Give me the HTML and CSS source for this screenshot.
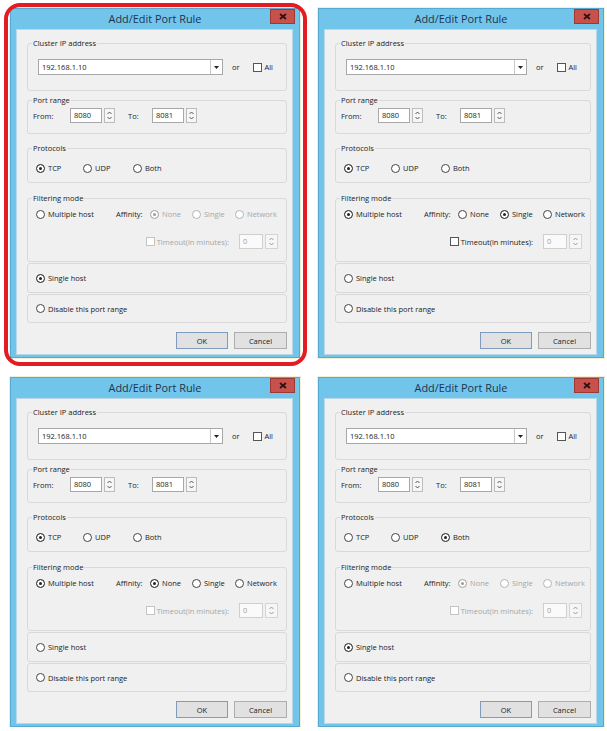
FILE: index.html
```html
<!DOCTYPE html>
<html lang="en">
<head>
    <meta charset="UTF-8">
    <meta name="viewport" content="width=device-width, initial-scale=1.0">
    <title>Add/Edit Port Rule</title>
    <link rel="stylesheet" href="styles.css">
</head>
<body>
    <div class="sheet">

        <!-- 1: single host, TCP -->
        <div class="dialog highlight">
            <div class="titlebar">
                <span class="title">Add/Edit Port Rule</span>
                <span class="close"><svg width="8" height="7" viewBox="0 0 8 7"><path d="M1 1l6 5M7 1 1 6" stroke="#2a1414" stroke-width="1.8"/></svg></span>
            </div>
            <div class="client">
                <fieldset class="group g-ip">
                    <legend>Cluster IP address</legend>
                    <div class="row">
                        <div class="combo"><span class="combo-text">192.168.1.10</span><span class="combo-btn"><svg width="5" height="3" viewBox="0 0 5 3"><path d="M0 0h5L2.5 3z" fill="#222"/></svg></span></div>
                        <span class="or">or</span>
                        <span class="check"><span class="box"></span>All</span>
                    </div>
                </fieldset>
                <fieldset class="group g-port">
                    <legend>Port range</legend>
                    <div class="row">
                        <span class="from">From:</span>
                        <div class="spin"><span class="spin-text">8080</span><span class="spin-btn"><svg width="7" height="11" viewBox="0 0 7 11"><path d="M1.5 4 3.5 2 5.5 4M1.5 7 3.5 9 5.5 7" fill="none" stroke="#555"/></svg></span></div>
                        <span class="to">To:</span>
                        <div class="spin"><span class="spin-text">8081</span><span class="spin-btn"><svg width="7" height="11" viewBox="0 0 7 11"><path d="M1.5 4 3.5 2 5.5 4M1.5 7 3.5 9 5.5 7" fill="none" stroke="#555"/></svg></span></div>
                    </div>
                </fieldset>
                <fieldset class="group g-proto">
                    <legend>Protocols</legend>
                    <div class="row">
                        <span class="radio tcp on"><span class="dot"></span>TCP</span>
                        <span class="radio udp"><span class="dot"></span>UDP</span>
                        <span class="radio"><span class="dot"></span>Both</span>
                    </div>
                </fieldset>
                <fieldset class="group g-filter">
                    <legend>Filtering mode</legend>
                    <div class="row">
                        <span class="radio multi"><span class="dot"></span>Multiple host</span>
                        <span class="affinity">Affinity:</span>
                        <span class="radio none on off"><span class="dot"></span>None</span>
                        <span class="radio single off"><span class="dot"></span>Single</span>
                        <span class="radio off"><span class="dot"></span>Network</span>
                    </div>
                    <div class="row timeout">
                        <span class="check off"><span class="box"></span>Timeout(in minutes):</span>
                        <div class="spin small off"><span class="spin-text">0</span><span class="spin-btn"><svg width="7" height="11" viewBox="0 0 7 11"><path d="M1.5 4 3.5 2 5.5 4M1.5 7 3.5 9 5.5 7" fill="none" stroke="#999"/></svg></span></div>
                    </div>
                </fieldset>
                <div class="group-plain first">
                    <span class="radio on"><span class="dot"></span>Single host</span>
                </div>
                <div class="group-plain">
                    <span class="radio"><span class="dot"></span>Disable this port range</span>
                </div>
                <div class="buttons">
                    <button class="default">OK</button>
                    <button>Cancel</button>
                </div>
            </div>
        </div>

        <!-- 2: multiple host, affinity single -->
        <div class="dialog">
            <div class="titlebar">
                <span class="title">Add/Edit Port Rule</span>
                <span class="close"><svg width="8" height="7" viewBox="0 0 8 7"><path d="M1 1l6 5M7 1 1 6" stroke="#2a1414" stroke-width="1.8"/></svg></span>
            </div>
            <div class="client">
                <fieldset class="group g-ip">
                    <legend>Cluster IP address</legend>
                    <div class="row">
                        <div class="combo"><span class="combo-text">192.168.1.10</span><span class="combo-btn"><svg width="5" height="3" viewBox="0 0 5 3"><path d="M0 0h5L2.5 3z" fill="#222"/></svg></span></div>
                        <span class="or">or</span>
                        <span class="check"><span class="box"></span>All</span>
                    </div>
                </fieldset>
                <fieldset class="group g-port">
                    <legend>Port range</legend>
                    <div class="row">
                        <span class="from">From:</span>
                        <div class="spin"><span class="spin-text">8080</span><span class="spin-btn"><svg width="7" height="11" viewBox="0 0 7 11"><path d="M1.5 4 3.5 2 5.5 4M1.5 7 3.5 9 5.5 7" fill="none" stroke="#555"/></svg></span></div>
                        <span class="to">To:</span>
                        <div class="spin"><span class="spin-text">8081</span><span class="spin-btn"><svg width="7" height="11" viewBox="0 0 7 11"><path d="M1.5 4 3.5 2 5.5 4M1.5 7 3.5 9 5.5 7" fill="none" stroke="#555"/></svg></span></div>
                    </div>
                </fieldset>
                <fieldset class="group g-proto">
                    <legend>Protocols</legend>
                    <div class="row">
                        <span class="radio tcp on"><span class="dot"></span>TCP</span>
                        <span class="radio udp"><span class="dot"></span>UDP</span>
                        <span class="radio"><span class="dot"></span>Both</span>
                    </div>
                </fieldset>
                <fieldset class="group g-filter">
                    <legend>Filtering mode</legend>
                    <div class="row">
                        <span class="radio multi on"><span class="dot"></span>Multiple host</span>
                        <span class="affinity">Affinity:</span>
                        <span class="radio none"><span class="dot"></span>None</span>
                        <span class="radio single on"><span class="dot"></span>Single</span>
                        <span class="radio"><span class="dot"></span>Network</span>
                    </div>
                    <div class="row timeout">
                        <span class="check"><span class="box"></span>Timeout(in minutes):</span>
                        <div class="spin small off"><span class="spin-text">0</span><span class="spin-btn"><svg width="7" height="11" viewBox="0 0 7 11"><path d="M1.5 4 3.5 2 5.5 4M1.5 7 3.5 9 5.5 7" fill="none" stroke="#999"/></svg></span></div>
                    </div>
                </fieldset>
                <div class="group-plain first">
                    <span class="radio"><span class="dot"></span>Single host</span>
                </div>
                <div class="group-plain">
                    <span class="radio"><span class="dot"></span>Disable this port range</span>
                </div>
                <div class="buttons">
                    <button class="default">OK</button>
                    <button>Cancel</button>
                </div>
            </div>
        </div>

        <!-- 3: multiple host, affinity none -->
        <div class="dialog">
            <div class="titlebar">
                <span class="title">Add/Edit Port Rule</span>
                <span class="close"><svg width="8" height="7" viewBox="0 0 8 7"><path d="M1 1l6 5M7 1 1 6" stroke="#2a1414" stroke-width="1.8"/></svg></span>
            </div>
            <div class="client">
                <fieldset class="group g-ip">
                    <legend>Cluster IP address</legend>
                    <div class="row">
                        <div class="combo"><span class="combo-text">192.168.1.10</span><span class="combo-btn"><svg width="5" height="3" viewBox="0 0 5 3"><path d="M0 0h5L2.5 3z" fill="#222"/></svg></span></div>
                        <span class="or">or</span>
                        <span class="check"><span class="box"></span>All</span>
                    </div>
                </fieldset>
                <fieldset class="group g-port">
                    <legend>Port range</legend>
                    <div class="row">
                        <span class="from">From:</span>
                        <div class="spin"><span class="spin-text">8080</span><span class="spin-btn"><svg width="7" height="11" viewBox="0 0 7 11"><path d="M1.5 4 3.5 2 5.5 4M1.5 7 3.5 9 5.5 7" fill="none" stroke="#555"/></svg></span></div>
                        <span class="to">To:</span>
                        <div class="spin"><span class="spin-text">8081</span><span class="spin-btn"><svg width="7" height="11" viewBox="0 0 7 11"><path d="M1.5 4 3.5 2 5.5 4M1.5 7 3.5 9 5.5 7" fill="none" stroke="#555"/></svg></span></div>
                    </div>
                </fieldset>
                <fieldset class="group g-proto">
                    <legend>Protocols</legend>
                    <div class="row">
                        <span class="radio tcp on"><span class="dot"></span>TCP</span>
                        <span class="radio udp"><span class="dot"></span>UDP</span>
                        <span class="radio"><span class="dot"></span>Both</span>
                    </div>
                </fieldset>
                <fieldset class="group g-filter">
                    <legend>Filtering mode</legend>
                    <div class="row">
                        <span class="radio multi on"><span class="dot"></span>Multiple host</span>
                        <span class="affinity">Affinity:</span>
                        <span class="radio none on"><span class="dot"></span>None</span>
                        <span class="radio single"><span class="dot"></span>Single</span>
                        <span class="radio"><span class="dot"></span>Network</span>
                    </div>
                    <div class="row timeout">
                        <span class="check off"><span class="box"></span>Timeout(in minutes):</span>
                        <div class="spin small off"><span class="spin-text">0</span><span class="spin-btn"><svg width="7" height="11" viewBox="0 0 7 11"><path d="M1.5 4 3.5 2 5.5 4M1.5 7 3.5 9 5.5 7" fill="none" stroke="#999"/></svg></span></div>
                    </div>
                </fieldset>
                <div class="group-plain first">
                    <span class="radio"><span class="dot"></span>Single host</span>
                </div>
                <div class="group-plain">
                    <span class="radio"><span class="dot"></span>Disable this port range</span>
                </div>
                <div class="buttons">
                    <button class="default">OK</button>
                    <button>Cancel</button>
                </div>
            </div>
        </div>

        <!-- 4: single host, both protocols -->
        <div class="dialog">
            <div class="titlebar">
                <span class="title">Add/Edit Port Rule</span>
                <span class="close"><svg width="8" height="7" viewBox="0 0 8 7"><path d="M1 1l6 5M7 1 1 6" stroke="#2a1414" stroke-width="1.8"/></svg></span>
            </div>
            <div class="client">
                <fieldset class="group g-ip">
                    <legend>Cluster IP address</legend>
                    <div class="row">
                        <div class="combo"><span class="combo-text">192.168.1.10</span><span class="combo-btn"><svg width="5" height="3" viewBox="0 0 5 3"><path d="M0 0h5L2.5 3z" fill="#222"/></svg></span></div>
                        <span class="or">or</span>
                        <span class="check"><span class="box"></span>All</span>
                    </div>
                </fieldset>
                <fieldset class="group g-port">
                    <legend>Port range</legend>
                    <div class="row">
                        <span class="from">From:</span>
                        <div class="spin"><span class="spin-text">8080</span><span class="spin-btn"><svg width="7" height="11" viewBox="0 0 7 11"><path d="M1.5 4 3.5 2 5.5 4M1.5 7 3.5 9 5.5 7" fill="none" stroke="#555"/></svg></span></div>
                        <span class="to">To:</span>
                        <div class="spin"><span class="spin-text">8081</span><span class="spin-btn"><svg width="7" height="11" viewBox="0 0 7 11"><path d="M1.5 4 3.5 2 5.5 4M1.5 7 3.5 9 5.5 7" fill="none" stroke="#555"/></svg></span></div>
                    </div>
                </fieldset>
                <fieldset class="group g-proto">
                    <legend>Protocols</legend>
                    <div class="row">
                        <span class="radio tcp"><span class="dot"></span>TCP</span>
                        <span class="radio udp"><span class="dot"></span>UDP</span>
                        <span class="radio on"><span class="dot"></span>Both</span>
                    </div>
                </fieldset>
                <fieldset class="group g-filter">
                    <legend>Filtering mode</legend>
                    <div class="row">
                        <span class="radio multi"><span class="dot"></span>Multiple host</span>
                        <span class="affinity">Affinity:</span>
                        <span class="radio none on off"><span class="dot"></span>None</span>
                        <span class="radio single off"><span class="dot"></span>Single</span>
                        <span class="radio off"><span class="dot"></span>Network</span>
                    </div>
                    <div class="row timeout">
                        <span class="check off"><span class="box"></span>Timeout(in minutes):</span>
                        <div class="spin small off"><span class="spin-text">0</span><span class="spin-btn"><svg width="7" height="11" viewBox="0 0 7 11"><path d="M1.5 4 3.5 2 5.5 4M1.5 7 3.5 9 5.5 7" fill="none" stroke="#999"/></svg></span></div>
                    </div>
                </fieldset>
                <div class="group-plain first">
                    <span class="radio on"><span class="dot"></span>Single host</span>
                </div>
                <div class="group-plain">
                    <span class="radio"><span class="dot"></span>Disable this port range</span>
                </div>
                <div class="buttons">
                    <button class="default">OK</button>
                    <button>Cancel</button>
                </div>
            </div>
        </div>

    </div>
</body>
</html>
```

FILE: styles.css
```css
body {
    margin: 0;
    padding: 8px 0 0 10px;
    background: #fff;
    font-family: "Open Sans", "Noto Sans", sans-serif;
    font-size: 7.5px;
    color: #222;
}
.sheet {
    display: grid;
    grid-template-columns: 290px 286px;
    grid-auto-rows: 350px;
    column-gap: 18px;
    row-gap: 19px;
}

/* window frame */
.dialog {
    display: flex;
    flex-direction: column;
    background: #72c5ea;
    border: 1px solid #58a9cf;
    box-shadow: 0 0 0 1px #f3eed6;
}
.dialog.highlight {
    position: relative;
}
.dialog.highlight::before {
    content: "";
    position: absolute;
    top: -6px;
    left: -7px;
    right: -8px;
    bottom: -9px;
    border: 4px solid #e31b23;
    border-radius: 16px;
}
.titlebar {
    display: flex;
    align-items: flex-start;
    height: 20px;
}
.title {
    flex: 1;
    padding-left: 29px;
    line-height: 19px;
    text-align: center;
    font-size: 10.9px;
    color: #1d3450;
}
.close {
    width: 25px;
    height: 15px;
    margin-right: 4px;
    box-sizing: border-box;
    background: #c8524b;
    border: 1px solid #9b3a34;
    display: flex;
    align-items: center;
    justify-content: center;
}
.client {
    flex: 1;
    margin: 0 6px 2px 5px;
    padding: 8px 5px 0 10px;
    background: #f0f0f0;
    border: 1px solid #b6d8e8;
    display: flex;
    flex-direction: column;
}

/* group boxes */
.group {
    margin: 0;
    padding: 0;
    min-width: 0;
    border: 1px solid #d9d9d9;
    border-radius: 3px;
}
.group legend {
    margin-left: 4px;
    padding: 0 1px;
    line-height: 10px;
}
.g-ip {
    padding: 11px 0 15px;
}
.g-port {
    margin-top: 4px;
    padding: 3px 0 10px;
}
.g-proto {
    margin-top: 9px;
    padding: 9px 0 8px;
}
.g-filter {
    margin-top: 10px;
    padding: 5px 0 12px;
}
.group-plain {
    display: flex;
    align-items: center;
    box-sizing: border-box;
    height: 29px;
    margin-top: 1px;
    padding-left: 8px;
    border: 1px solid #d9d9d9;
    border-radius: 3px;
}
.group-plain.first {
    height: 30px;
}

.row {
    display: flex;
    align-items: center;
    height: 12px;
}
.g-ip .row {
    height: 16px;
    padding: 0 13px 0 10px;
}
.g-port .row {
    height: 15px;
    padding-left: 5px;
}
.g-proto .row,
.g-filter .row {
    padding-left: 8px;
}
.g-filter .timeout {
    height: 15px;
    margin-top: 14px;
    padding: 0 8px 0 0;
    justify-content: flex-end;
}

/* controls */
.combo {
    flex: 1;
    display: flex;
    height: 16px;
    box-sizing: border-box;
    background: #fff;
    border: 1px solid #a8a8a8;
}
.combo-text {
    flex: 1;
    padding-left: 3px;
    line-height: 14px;
}
.combo-btn {
    width: 11px;
    border-left: 1px solid #c8c8c8;
    display: flex;
    align-items: center;
    justify-content: center;
}
.or {
    margin: 0 14px 0 9px;
}
.check {
    display: flex;
    align-items: center;
}
.box {
    width: 9px;
    height: 9px;
    box-sizing: border-box;
    margin-right: 2px;
    background: #fff;
    border: 1px solid #555;
}
.check.off {
    color: #a6a6a6;
}
.check.off .box {
    border-color: #c4c4c4;
}
.from {
    width: 37px;
}
.to {
    width: 24px;
    margin-left: 13px;
}
.spin {
    display: flex;
    gap: 2px;
    height: 15px;
}
.spin-text {
    width: 32px;
    box-sizing: border-box;
    padding-left: 3px;
    line-height: 13px;
    background: #fff;
    border: 1px solid #a8a8a8;
}
.spin-btn {
    width: 11px;
    box-sizing: border-box;
    background: #f6f6f6;
    border: 1px solid #bcbcbc;
    display: flex;
    align-items: center;
    justify-content: center;
}
.spin.small {
    margin-left: 10px;
}
.spin.small .spin-text {
    width: 24px;
}
.spin.small .spin-btn {
    width: 13px;
}
.spin.off .spin-text {
    color: #a0a0a0;
    background: #fafafa;
    border-color: #cfcfcf;
}
.spin.off .spin-btn {
    border-color: #d4d4d4;
}

.radio {
    display: flex;
    align-items: center;
}
.dot {
    width: 9px;
    height: 9px;
    box-sizing: border-box;
    margin-right: 3px;
    border: 1px solid #444;
    border-radius: 50%;
    background: #fff;
}
.radio.on .dot {
    background: #222;
    box-shadow: inset 0 0 0 2px #fff;
}
.radio.off {
    color: #a6a6a6;
}
.radio.off .dot {
    border-color: #b4b4b4;
}
.radio.off.on .dot {
    background: #9c9c9c;
}
.radio.tcp {
    width: 47px;
}
.radio.udp {
    width: 50px;
}
.radio.multi {
    width: 80px;
}
.affinity {
    width: 34px;
}
.radio.none {
    width: 42px;
}
.radio.single {
    width: 43px;
}

.buttons {
    display: flex;
    justify-content: flex-end;
    gap: 6px;
    margin-top: 9px;
}
button {
    width: 53px;
    height: 17px;
    padding: 0;
    font: inherit;
    color: #222;
    background: #e1e1e1;
    border: 1px solid #adadad;
}
button.default {
    width: 52px;
    border-color: #7f9cbf;
}
```
